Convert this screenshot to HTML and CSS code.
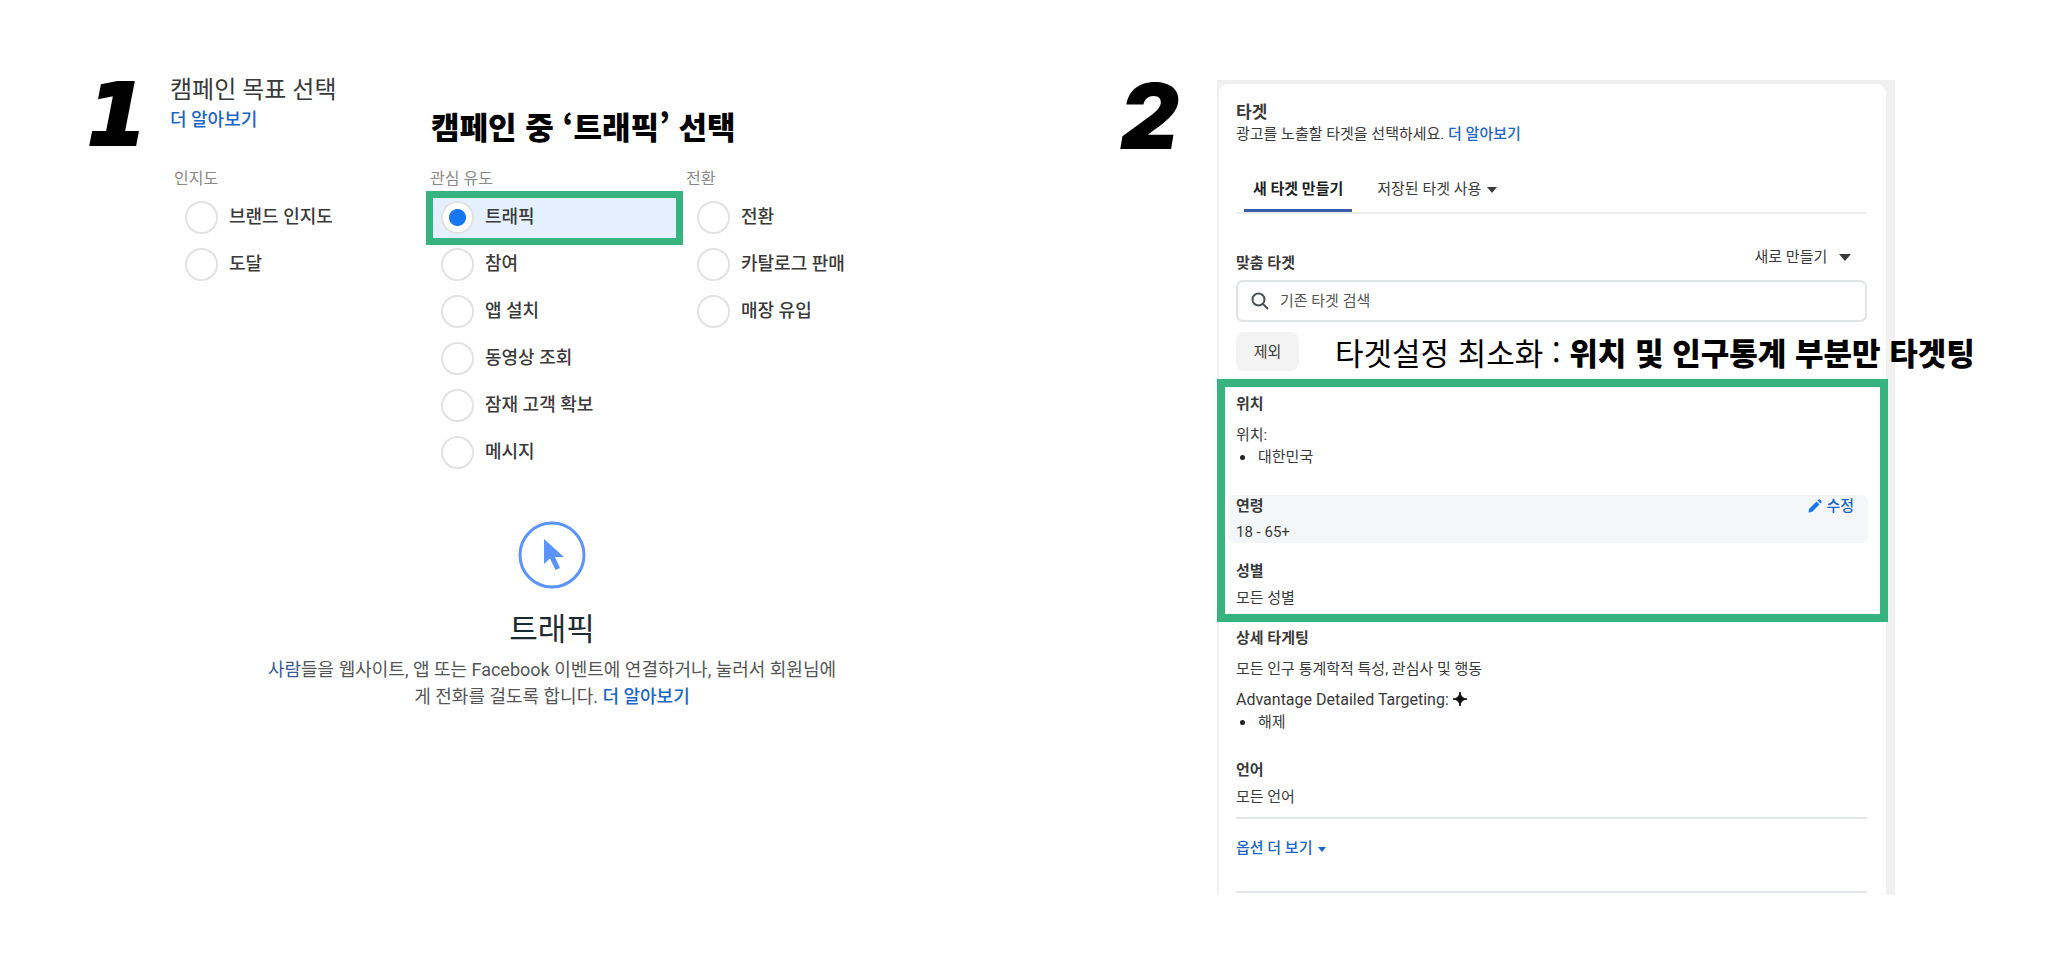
FILE: index.html
```html
<!DOCTYPE html>
<html lang="ko">
<head>
    <meta charset="UTF-8">
    <meta name="viewport" content="width=device-width, initial-scale=1.0">
    <title>캠페인 목표 선택</title>
    <link rel="stylesheet" href="styles.css">
</head>
<body>
    <main>
        <div class="number number-one">1</div>

        <section class="campaign">
            <header class="campaign-head">
                <div class="campaign-title">
                    <h1>캠페인 목표 선택</h1>
                    <a href="#">더 알아보기</a>
                </div>
                <h2 class="note">캠페인 중 ‘트래픽’ 선택</h2>
            </header>

            <form class="goals">
                <fieldset>
                    <legend>인지도</legend>
                    <label class="goal"><input type="radio" name="goal">브랜드 인지도</label>
                    <label class="goal"><input type="radio" name="goal">도달</label>
                </fieldset>
                <fieldset>
                    <legend>관심 유도</legend>
                    <label class="goal selected"><input type="radio" name="goal" checked>트래픽</label>
                    <label class="goal"><input type="radio" name="goal">참여</label>
                    <label class="goal"><input type="radio" name="goal">앱 설치</label>
                    <label class="goal"><input type="radio" name="goal">동영상 조회</label>
                    <label class="goal"><input type="radio" name="goal">잠재 고객 확보</label>
                    <label class="goal"><input type="radio" name="goal">메시지</label>
                </fieldset>
                <fieldset>
                    <legend>전환</legend>
                    <label class="goal"><input type="radio" name="goal">전환</label>
                    <label class="goal"><input type="radio" name="goal">카탈로그 판매</label>
                    <label class="goal"><input type="radio" name="goal">매장 유입</label>
                </fieldset>
            </form>

            <div class="summary">
                <svg width="68" height="68" viewBox="0 0 68 68">
                    <circle cx="34" cy="34" r="32" fill="none" stroke="#5b93ff" stroke-width="3"/>
                    <path d="M26 18 L26 43 L32 37.500 L37.500 49 L42 47 L37 36 L46 36 Z" fill="#5b93ff"/>
                </svg>
                <h3>트래픽</h3>
                <p><span class="mark">사람</span>들을 웹사이트, 앱 또는 Facebook 이벤트에 연결하거나, 눌러서 회원님에<br>게 전화를 걸도록 합니다. <a href="#">더 알아보기</a></p>
            </div>
        </section>

        <div class="number number-two">2</div>

        <section class="target">
            <div class="card">
                <h2>타겟</h2>
                <p>광고를 노출할 타겟을 선택하세요. <a href="#">더 알아보기</a></p>

                <nav class="tabs">
                    <button type="button" class="tab active">새 타겟 만들기</button>
                    <button type="button" class="tab">저장된 타겟 사용 <span class="caret"></span></button>
                </nav>

                <div class="custom-head">
                    <label for="search">맞춤 타겟</label>
                    <button type="button" class="create">새로 만들기 <span class="caret"></span></button>
                </div>
                <div class="search">
                    <svg width="18" height="18" viewBox="0 0 18 18" fill="none" stroke="#4b4f56" stroke-width="2">
                        <circle cx="7.500" cy="7.500" r="6"/>
                        <path d="M12 12 L17 17"/>
                    </svg>
                    <input type="text" id="search" placeholder="기존 타겟 검색">
                </div>
                <div class="exclude-row">
                    <button type="button" class="exclude">제외</button>
                    <div class="note"><span>타겟설정 최소화 : </span>위치 및 인구통계 부분만 타겟팅</div>
                </div>

                <div class="highlight">
                    <h3>위치</h3>
                    <p class="gap-large">위치:</p>
                    <ul>
                        <li>대한민국</li>
                    </ul>
                    <div class="age">
                        <div>
                            <h3>연령</h3>
                            <p>18 - 65+</p>
                        </div>
                        <button type="button" class="edit">
                            <svg width="14" height="14" viewBox="0 0 14 14" fill="#1877f2">
                                <path d="M0.500 13.500 L1 10 L8.500 2.500 L11.500 5.500 L4 13 Z"/>
                                <path d="M9.500 1.500 L10.500 0.500 Q11.500 0 12.500 1 L13 1.500 Q14 2.500 13.500 3.500 L12.500 4.500 Z"/>
                            </svg>
                            수정
                        </button>
                    </div>
                    <h3>성별</h3>
                    <p class="gap-small">모든 성별</p>
                </div>

                <div class="details">
                    <h3>상세 타게팅</h3>
                    <p class="gap-large">모든 인구 통계학적 특성, 관심사 및 행동</p>
                    <p class="gap-large advantage">Advantage Detailed Targeting:
                        <svg width="14" height="14" viewBox="0 0 14 14"><path d="M7 0 Q7.500 6.500 14 7 Q7.500 7.500 7 14 Q6.500 7.500 0 7 Q6.500 6.500 7 0 Z" fill="#111" stroke="#111"/></svg>
                    </p>
                    <ul>
                        <li>해제</li>
                    </ul>
                    <h3 class="language">언어</h3>
                    <p class="gap-small">모든 언어</p>
                </div>
                <hr>
                <button type="button" class="more">옵션 더 보기 <span class="caret"></span></button>
                <hr>
            </div>
        </section>
    </main>
</body>
</html>
```
FILE: styles.css
```css
* { box-sizing: border-box; }
body { margin: 0; background: #fff; color: #3a3a3a; font-family: Roboto, "Noto Sans CJK KR", sans-serif; font-size: 15px; line-height: 22px; }
h1, h2, h3, p, ul, fieldset { margin: 0; padding: 0; border: 0; }
a { color: #1b66c9; text-decoration: none; font-weight: 500; }
button { font: inherit; color: inherit; background: none; border: none; padding: 0; cursor: pointer; }
main { display: grid; grid-template-columns: 82px minmax(0, 950fr) 97px minmax(0, 678fr); align-items: start; padding: 74px 153px 74px 88px; }

.number { color: #000; font-size: 91px; line-height: 76px; font-style: italic; font-weight: 900; }
.number-one { margin-top: 3px; font-family: "DejaVu Sans", sans-serif; font-size: 84px; -webkit-text-stroke: 4px #000; }
.number-two { font-family: Inter, sans-serif; margin-top: 4px; }
.note { color: #000; font-family: "Noto Sans CJK KR", sans-serif; font-size: 31px; line-height: 40px; font-weight: 900; white-space: nowrap; }
.note span { font-weight: 400; }

/* step 1 */
.campaign { padding-right: 186px; font-size: 18px; }
.campaign-head { display: flex; align-items: flex-end; height: 72px; }
.campaign-title { width: 261px; align-self: flex-start; }
.campaign-title h1 { font-size: 24px; line-height: 32px; font-weight: 400; }
.campaign-title a { display: block; line-height: 24px; margin-top: 2px; }
.goals { display: grid; grid-template-columns: repeat(3, 256px); margin: 22px 0 0 4px; }
legend { padding: 0; margin-bottom: 8px; color: #8a8a8a; font-size: 16px; }
.goal { display: flex; align-items: center; gap: 11px; width: 243px; height: 40px; margin: 0 0 7px 3px; padding: 0 0 2px 8px; font-weight: 500; }
.goal input { appearance: none; width: 33px; height: 33px; margin: 0; border: 2px solid #e2e2e2; border-radius: 50%; background: #fff; }
.goal input:checked { background: radial-gradient(circle, #1877f2 8px, #fff 9px); }
.goal.selected { background: #e4f0fe; outline: 7px solid #36b37e; }
.summary { margin-top: 41px; text-align: center; color: #555; line-height: 27px; }
.summary svg { display: block; margin: 0 auto; }
.summary h3 { margin: 21px 0 6px; color: #1c2b33; font-size: 31px; line-height: 40px; font-weight: 400; }
.summary p { white-space: nowrap; }
.mark { color: #385898; }

/* step 2 */
.target { margin-top: 6px; padding: 4px 9px 0 2px; background: #f0f0f0; }
.card { padding: 17px 19px 2px 17px; background: #fff; border-radius: 9px 9px 0 0; }
.card h2 { font-size: 17px; line-height: 22px; font-weight: 700; }
.card h3 { font-size: 15px; font-weight: 700; }
.tabs { display: flex; gap: 16px; margin-top: 33px; padding-left: 8px; border-bottom: 2px solid #ebedf0; }
.tab { padding: 0 9px 9px; border-bottom: 3px solid transparent; }
.tab.active { color: #1c1e21; border-color: #3b5ba9; font-weight: 700; }
.caret { display: inline-block; margin-left: 2px; border: 5px solid transparent; border-top: 6px solid currentColor; border-bottom: none; vertical-align: 1px; }
.custom-head { display: flex; justify-content: space-between; height: 28px; margin: 32px 0 6px; }
.custom-head label { align-self: flex-end; font-weight: 700; }
.create { align-self: flex-start; padding-right: 16px; }
.create .caret { margin-left: 8px; border-width: 7px 6px 0; }
.search { display: flex; align-items: center; gap: 11px; height: 42px; padding: 0 13px; border: 2px solid #e1e4e7; border-radius: 7px; }
.search input { flex: 1; border: none; outline: none; padding: 0; font: inherit; }
.search input::placeholder { color: #555; }
.exclude-row { display: flex; align-items: center; gap: 36px; margin: 10px 0 8px; }
.exclude { flex: none; width: 63px; height: 39px; border-radius: 8px; background: #f3f3f3; }
.exclude-row .note { height: 39px; width: 0; z-index: 1; }
.highlight { margin: 0 -21px 0 -19px; padding: 6px 13px 5px 11px; border: 8px solid #36b37e; position: relative; }
.gap-large { margin-top: 9px; }
.gap-small { margin-top: 5px; }
ul { list-style: none; }
li { display: flex; align-items: center; gap: 13px; padding-left: 4px; }
li::before { content: ""; width: 5px; height: 5px; border-radius: 50%; background: #222; }
.age { display: flex; justify-content: space-between; align-items: flex-start; margin: 27px -1px 17px -8px; padding: 0 14px 0 8px; background: #f4f6f8; border-radius: 6px; }
.age p { margin-top: 4px; }
.edit { display: flex; align-items: center; gap: 4px; color: #1b66c9; font-weight: 500; }
.details { margin: 5px 0 9px; }
.advantage { font-size: 16px; }
.advantage svg { vertical-align: -1px; }
.language { margin-top: 26px; }
hr { margin: 0; border: none; border-top: 2px solid #e3e6e8; }
.more { display: block; margin: 18px 0 32px; color: #1b66c9; font-weight: 500; }
.more .caret { margin-left: 2px; border-width: 5px 4px 0; }
```
